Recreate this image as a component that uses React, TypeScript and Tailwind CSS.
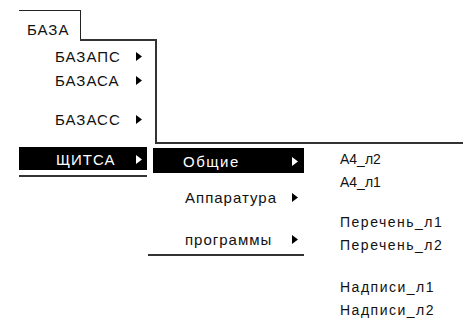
import React from "react";

const Tri = ({ white = false }: { white?: boolean }) => (
  <svg width="6" height="9" viewBox="0 0 6 9" className="shrink-0">
    <path d="M0 0 L6 4.5 L0 9 Z" fill={white ? "#ffffff" : "#000000"} />
  </svg>
);

const Item = ({ label, className = "" }: { label: string; className?: string }) => (
  <div className={`flex items-center justify-between ${className}`}>
    <span>{label}</span>
    <Tri />
  </div>
);

export default function App() {
  return (
    <div
      className="w-[463px] h-[327px] bg-white text-[#111] overflow-hidden"
      style={{ fontFamily: '"Liberation Sans", Arial, sans-serif' }}
    >
      <div className="pt-[10px] pl-[19px] text-[15px] leading-none tracking-[1px]">
        {/* Tab */}
        <div className="w-[62px] h-[29px] border-t border-r border-[#222] pl-[8px] pt-[11px]">
          БАЗА
        </div>
        {/* First panel */}
        <div className="flex">
          <div className="w-[138px]">
            <div className="flex">
              <div className="w-[61px]" />
              <div className="flex-1 h-[2px] bg-[#333]" />
            </div>
            <div className="border-r-2 border-[#333] h-[101px] pl-[36px] pr-[13px] pt-[8px]">
              <Item label="БАЗАПС" />
              <Item label="БАЗАСА" className="mt-[9px]" />
              <Item label="БАЗАСС" className="mt-[24px]" />
            </div>
          </div>
        </div>
        <div className="flex">
          <div className="w-[136px]" />
          <div className="flex-1 h-[2px] bg-[#333]" />
        </div>
        {/* Lower cascade */}
        <div className="flex items-start mt-[3px]">
          <div className="w-[128px]">
            <div className="h-[23px] bg-black text-white flex items-center justify-between pl-[37px] pr-[5px] pt-[2px]">
              <span>ЩИТСА</span>
              <Tri white />
            </div>
            <div className="mt-[5px] h-[2px] bg-[#333]" />
          </div>
          <div className="w-[151px] ml-[6px] mt-[1px]">
            <div className="h-[25px] bg-black text-white flex items-center justify-between pl-[30px] pr-[6px] pt-[1px]">
              <span className="tracking-[1.5px]">Общие</span>
              <Tri white />
            </div>
            <div className="pl-[32px] pr-[6px]">
              <Item label="Аппаратура" className="mt-[17px]" />
              <Item label="программы" className="mt-[27px]" />
            </div>
            <div className="mt-[7px] ml-[-5px] h-[2px] bg-[#333]" />
          </div>
          <div className="ml-[36px] mt-[1px] text-[14px] leading-[23px]">
            <div className="tracking-[0px]">А4_л2</div>
            <div className="tracking-[0px]">А4_л1</div>
            <div className="mt-[17px] tracking-[1.5px]">Перечень_л1</div>
            <div className="tracking-[1.5px]">Перечень_л2</div>
            <div className="mt-[19px] tracking-[1.5px]">Надписи_л1</div>
            <div className="tracking-[1.5px]">Надписи_л2</div>
          </div>
        </div>
      </div>
    </div>
  );
}
